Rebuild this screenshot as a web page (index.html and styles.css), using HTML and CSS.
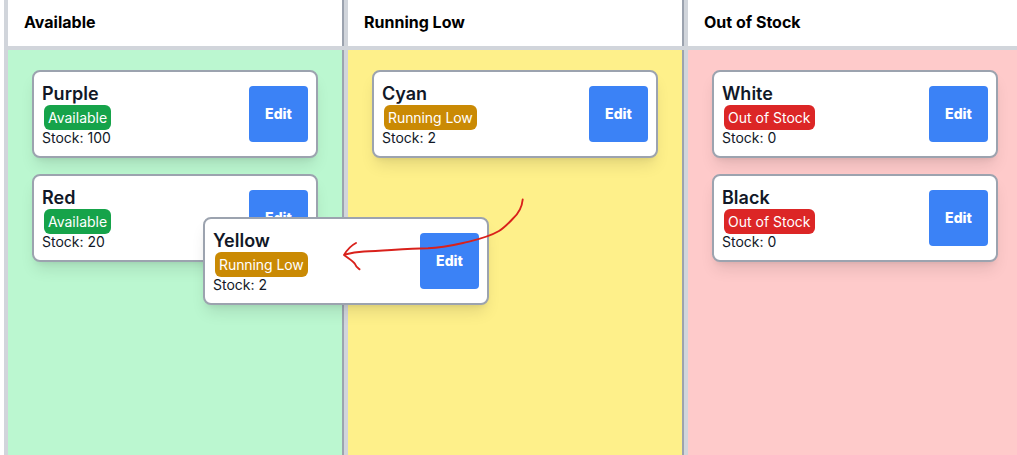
FILE: index.html
```html
<!DOCTYPE html>
<html lang="en">
<head>
<meta charset="utf-8">
<title>Stock board</title>
<link rel="stylesheet" href="styles.css">
</head>
<body>
<main class="board">
  <section class="column available">
    <h2 class="heading">Available</h2>
    <div class="list">
      <article class="card">
        <div class="info"><h3 class="name">Purple</h3><p class="line"><span class="badge">Available</span></p><p class="line">Stock: 100</p></div>
        <button class="edit">Edit</button>
      </article>
      <article class="card">
        <div class="info"><h3 class="name">Red</h3><p class="line"><span class="badge">Available</span></p><p class="line">Stock: 20</p></div>
        <button class="edit">Edit</button>
      </article>
    </div>
  </section>
  <section class="column low">
    <h2 class="heading">Running Low</h2>
    <div class="list">
      <article class="card">
        <div class="info"><h3 class="name">Cyan</h3><p class="line"><span class="badge">Running Low</span></p><p class="line">Stock: 2</p></div>
        <button class="edit">Edit</button>
      </article>
    </div>
  </section>
  <section class="column out">
    <h2 class="heading">Out of Stock</h2>
    <div class="list">
      <article class="card">
        <div class="info"><h3 class="name">White</h3><p class="line"><span class="badge">Out of Stock</span></p><p class="line">Stock: 0</p></div>
        <button class="edit">Edit</button>
      </article>
      <article class="card">
        <div class="info"><h3 class="name">Black</h3><p class="line"><span class="badge">Out of Stock</span></p><p class="line">Stock: 0</p></div>
        <button class="edit">Edit</button>
      </article>
    </div>
  </section>
  <article class="card dragged low">
    <div class="info"><h3 class="name">Yellow</h3><p class="line"><span class="badge">Running Low</span></p><p class="line">Stock: 2</p></div>
    <button class="edit">Edit</button>
  </article>
  <svg class="arrow" width="200" height="90" viewBox="335 190 200 90">
    <path d="M522.700 199.500C522 207 519 213 513 218.500C508 224 504 228 499 231C487 238 475 240 463 243C450 246 440 248 428 248.300C405 248.300 385 251 364 251.500C357 252 351 253 345 254.500"/>
    <path d="M356 243C350 246 347 250 344 255C349 259 353 261 355 264C356 267 358 268 359.500 269.300"/>
  </svg>
</main>
</body>
</html>
```
FILE: styles.css
```css
* { box-sizing: border-box; }

body {
  margin: 0;
  overflow: hidden;
  background: #fff;
  color: #111827;
  font-family: Inter, "Liberation Sans", sans-serif;
}

h2, h3, p { margin: 0; }

.board {
  position: relative;
  display: flex;
  width: 1017px;
  height: 455px;
  padding-left: 4px;
  overflow: hidden;
}

.column {
  display: flex;
  flex: none;
  flex-direction: column;
  width: 340px;
  border-left: 4px solid #d1d5db;
}

.heading {
  height: 46px;
  padding: 10px 16px;
  border-right: 2px solid #9ca3af;
  color: #000;
  font-size: 16px;
  font-weight: 700;
  line-height: 24px;
}

.list {
  position: relative;
  display: flex;
  flex: 1;
  flex-direction: column;
  gap: 16px;
  margin-top: 4px;
  padding: 20px 24px;
  border-right: 2px solid #9ca3af;
  background: var(--fill);
  box-shadow: 0 -4px #d1d5db;
}

.available { --fill: #bbf7d0; --badge: #16a34a; }
.low { --fill: #fef08a; --badge: #ca8a04; }
.out { --fill: #fecaca; --badge: #dc2626; }

.card {
  display: flex;
  align-items: center;
  justify-content: space-between;
  width: 286px;
  height: 88px;
  padding: 8px;
  border: 2px solid #9ca3af;
  border-radius: 8px;
  background: #fff;
  box-shadow: 0 10px 15px -3px rgba(0, 0, 0, .1), 0 4px 6px -4px rgba(0, 0, 0, .1);
}

.name {
  font-size: 18px;
  font-weight: 600;
  line-height: 28px;
}

.line {
  font-size: 14px;
  line-height: 20px;
}

.badge {
  margin-left: 2px;
  padding: 4px;
  border-radius: 6px;
  background: var(--badge);
  color: #fff;
}

.low .badge,
.low.dragged .badge { letter-spacing: -.08px; }

.edit {
  width: 59px;
  height: 56px;
  padding: 0;
  border: 0;
  border-radius: 4px;
  background: #3b82f6;
  color: #fff;
  font: 800 14px/20px Inter, "Liberation Sans", sans-serif;
}

.dragged {
  position: absolute;
  top: 217px;
  left: 203px;
}

.arrow {
  position: absolute;
  top: 190px;
  left: 335px;
  fill: none;
  stroke: #d9211b;
  stroke-width: 1.9;
  stroke-linecap: round;
  stroke-linejoin: round;
}
```
